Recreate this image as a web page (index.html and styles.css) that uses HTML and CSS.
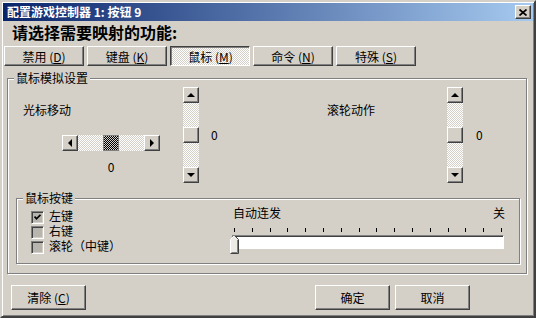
FILE: index.html
```html
<html>

<head>
	<meta charset="utf-8">
	<link rel="stylesheet" href="styles.css">
</head>

<body>

	<div class="window">

		<div class="titlebar">
			<span class="title">配置游戏控制器 1: 按钮 9</span>
			<span class="close raised">
				<svg width="8" height="7" viewBox="0 0 8 7">
					<path d="M0.5 0.5L7.5 6.5M7.5 0.5L0.5 6.5" stroke="#000" stroke-width="1.7" fill="none" />
				</svg>
			</span>
		</div>

		<h1 class="heading">请选择需要映射的功能:</h1>

		<div class="tabs">
			<button class="btn raised tab">禁用 (<u>D</u>)</button>
			<button class="btn raised tab">键盘 (<u>K</u>)</button>
			<button class="btn raised tab pressed">鼠标 (<u>M</u>)</button>
			<button class="btn raised tab">命令 (<u>N</u>)</button>
			<button class="btn raised tab">特殊 (<u>S</u>)</button>
		</div>

		<div class="group sim">
			<span class="group-title">鼠标模拟设置</span>

			<div class="sim-row">
				<div class="axis axis-cursor">
					<div class="axis-main">
						<div class="axis-label">光标移动</div>
						<div class="hscroll">
							<span class="sbtn raised"><i class="tri tri-left"></i></span>
							<span class="track"><span class="thumb thumb-dark"></span></span>
							<span class="sbtn raised"><i class="tri tri-right"></i></span>
						</div>
						<div class="hvalue">0</div>
					</div>
					<div class="vscroll">
						<span class="sbtn raised"><i class="tri tri-up"></i></span>
						<span class="track"><span class="thumb raised"></span></span>
						<span class="sbtn raised"><i class="tri tri-down"></i></span>
					</div>
					<div class="vvalue">0</div>
				</div>

				<div class="axis axis-wheel">
					<div class="axis-main">
						<div class="axis-label">滚轮动作</div>
					</div>
					<div class="vscroll">
						<span class="sbtn raised"><i class="tri tri-up"></i></span>
						<span class="track"><span class="thumb raised"></span></span>
						<span class="sbtn raised"><i class="tri tri-down"></i></span>
					</div>
					<div class="vvalue">0</div>
				</div>
			</div>

			<div class="group keys">
				<span class="group-title">鼠标按键</span>

				<div class="checks">
					<div class="check">
						<span class="box">
							<svg width="7" height="7" viewBox="0 0 7 7">
								<path d="M0.5 2.5L2.5 4.8L6.5 0.8" stroke="#000" stroke-width="1.8" fill="none" />
							</svg>
						</span>
						<span class="check-label">左键</span>
					</div>
					<div class="check">
						<span class="box"></span>
						<span class="check-label">右键</span>
					</div>
					<div class="check">
						<span class="box"></span>
						<span class="check-label">滚轮（中键）</span>
					</div>
				</div>

				<div class="autofire">
					<div class="af-labels">
						<span>自动连发</span>
						<span>关</span>
					</div>
					<div class="ticks">
						<span></span><span></span><span></span><span></span>
						<span></span><span></span><span></span><span></span>
						<span></span><span></span><span></span><span></span>
						<span></span><span></span><span></span><span></span>
					</div>
					<div class="trackbar">
						<div class="channel"></div>
						<svg class="slider-thumb" width="9" height="19" viewBox="0 0 9 19">
							<path d="M0.5 18.5V4.5L4.5 0.5L8.5 4.5V18.5Z" fill="#eeebe6" />
							<path d="M0.5 18V4.5L4.5 0.5" stroke="#fff" fill="none" />
							<path d="M4.5 0.5L8.5 4.5V18.5H0.5" stroke="#404040" fill="none" />
							<path d="M7.5 5V17.5H1.5" stroke="#808080" fill="none" />
						</svg>
					</div>
				</div>
			</div>
		</div>

		<div class="footer">
			<button class="btn raised btn-clear">清除 (<u>C</u>)</button>
			<button class="btn raised btn-ok">确定</button>
			<button class="btn raised btn-cancel">取消</button>
		</div>

	</div>

</body>

</html>
```

FILE: styles.css
```css
* {
	box-sizing: border-box;
}

html,
body {
	margin: 0;
}

body {
	font-family: "Noto Sans CJK SC", "Noto Sans", sans-serif;
	font-size: 12px;
	color: #000;
	background: #d4d0c8;
}

.window {
	width: 536px;
	height: 318px;
	padding: 1px;
	background: #d4d0c8;
	border: 2px solid;
	border-color: #d4d0c8 #404040 #404040 #d4d0c8;
	box-shadow: inset 1px 1px #fff, inset -1px -1px #808080;
}

.raised {
	background: #d4d0c8;
	border: 1px solid;
	border-color: #fff #404040 #404040 #fff;
	box-shadow: inset -1px -1px #808080;
}

/* title bar */

.titlebar {
	height: 18px;
	display: flex;
	align-items: center;
	justify-content: space-between;
	padding: 0 2px 0 4px;
	background: linear-gradient(to right, #0a246a, #a6caf0);
}

.title {
	color: #fff;
	font-weight: bold;
	line-height: 18px;
}

.close {
	width: 16px;
	height: 14px;
	display: flex;
	align-items: center;
	justify-content: center;
}

.heading {
	margin: 1px 0 4px 9px;
	font-size: 16px;
	line-height: 20px;
	font-weight: bold;
}

/* buttons */

.btn {
	font: inherit;
	color: #000;
	margin: 0;
	padding: 0;
	text-align: center;
}

.tabs {
	display: flex;
	gap: 3px;
	margin-left: 1px;
}

.tab {
	width: 80px;
	height: 20px;
}

.tab.pressed {
	border-color: #404040 #fff #fff #404040;
	box-shadow: inset 1px 1px #808080;
	background: repeating-conic-gradient(#fff 0 25%, #d4d0c8 0 50%) 0 0 / 2px 2px;
	padding: 1px 0 0 1px;
}

/* group boxes */

.group {
	position: relative;
	border: 1px solid #808080;
	box-shadow: inset 1px 1px #fff, 1px 1px #fff;
}

.group-title {
	position: absolute;
	top: -8px;
	left: 6px;
	padding: 0 2px;
	line-height: 14px;
	background: #d4d0c8;
}

.sim {
	margin: 12px 0 0 4px;
	width: 520px;
}

.sim-row {
	display: flex;
	height: 119px;
}

.axis {
	display: flex;
	align-items: flex-start;
}

.axis-cursor {
	width: 260px;
	padding-left: 15px;
}

.axis-wheel {
	padding-left: 59px;
}

.axis-main {
	display: flex;
	flex-direction: column;
}

.axis-cursor .axis-main {
	width: 160px;
}

.axis-wheel .axis-main {
	width: 120px;
}

.axis-label {
	margin-top: 24px;
	line-height: 14px;
}

.hvalue,
.vvalue {
	line-height: 14px;
}

.hvalue {
	margin: 9px 0 0 39px;
	width: 98px;
	text-align: center;
}

.vvalue {
	margin-top: 49px;
}

.axis-cursor .vvalue {
	margin-left: 12px;
}

.axis-wheel .vvalue {
	margin-left: 13px;
}

/* scroll bars */

.hscroll {
	margin: 18px 0 0 39px;
	width: 98px;
	height: 16px;
	display: flex;
}

.vscroll {
	margin-top: 8px;
	width: 16px;
	height: 96px;
	display: flex;
	flex-direction: column;
}

.sbtn {
	width: 16px;
	height: 16px;
	flex: none;
	display: flex;
	align-items: center;
	justify-content: center;
}

.track {
	flex: 1;
	display: flex;
	align-items: center;
	justify-content: center;
	background: repeating-conic-gradient(#fff 0 25%, #d4d0c8 0 50%) 0 0 / 2px 2px;
}

.thumb {
	width: 16px;
	height: 16px;
}

.thumb-dark {
	background: repeating-conic-gradient(#000 0 25%, #d4d0c8 0 50%) 0 0 / 2px 2px;
	border: 1px solid #808080;
}

.tri {
	width: 0;
	height: 0;
	border: 4px solid transparent;
}

.tri-up {
	border-top: 0;
	border-bottom-color: #000;
}

.tri-down {
	border-bottom: 0;
	border-top-color: #000;
}

.tri-left {
	border-left: 0;
	border-right-color: #000;
}

.tri-right {
	border-right: 0;
	border-left-color: #000;
}

/* mouse keys */

.keys {
	display: flex;
	height: 66px;
	margin: 0 6px 9px 8px;
}

.checks {
	width: 213px;
	padding: 11px 0 0 14px;
}

.check {
	display: flex;
	align-items: center;
	gap: 5px;
	height: 15px;
	line-height: 15px;
}

.check-label {
	font-family: "Liberation Sans", "Noto Sans CJK SC", sans-serif;
}

.box {
	width: 13px;
	height: 13px;
	display: flex;
	align-items: center;
	justify-content: center;
	border: 1px solid;
	border-color: #808080 #fff #fff #808080;
	box-shadow: inset 1px 1px #404040, inset -1px -1px #d4d0c8;
	background: #b8b5ae;
}

.autofire {
	width: 276px;
	padding-top: 7px;
}

.af-labels {
	display: flex;
	justify-content: space-between;
	padding: 0 1px 0 3px;
	line-height: 14px;
}

.ticks {
	display: flex;
	justify-content: space-between;
	height: 4px;
	margin: 8px 4px 0;
}

.ticks span {
	width: 1px;
	height: 4px;
	background: #000;
}

.trackbar {
	position: relative;
	height: 19px;
	margin-top: 2px;
}

.channel {
	height: 14px;
	margin: 3px 2px 0 2px;
	background: #fff;
	border: 1px solid;
	border-color: #808080 #fff #fff #808080;
	box-shadow: inset 1px 1px #404040;
}

.slider-thumb {
	position: absolute;
	left: 0;
	top: 0;
}

/* footer */

.footer {
	display: flex;
	margin-top: 11px;
}

.footer .btn {
	width: 75px;
	height: 25px;
}

.btn-clear {
	margin-left: 8px;
}

.btn-ok {
	margin-left: auto;
}

.btn-cancel {
	margin: 0 63px 0 5px;
}
```
